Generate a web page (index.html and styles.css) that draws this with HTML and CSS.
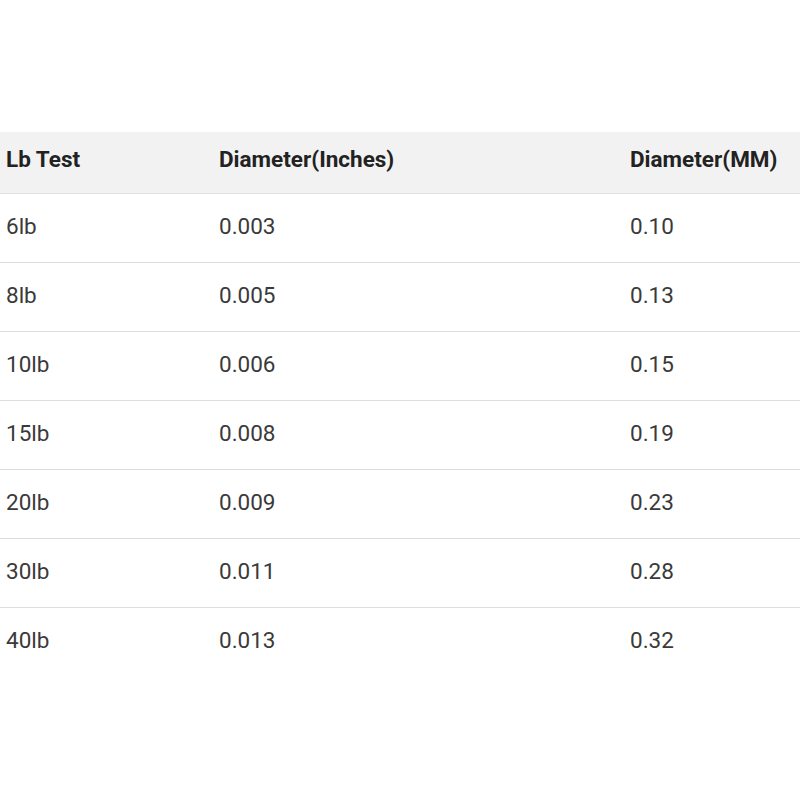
FILE: index.html
```html
<!DOCTYPE html>
<html>
<head>
<meta charset="utf-8">
<link rel="stylesheet" href="styles.css">
</head>
<body>
<div class="page">
  <table class="chart">
    <thead>
      <tr><th>Lb Test</th><th>Diameter(Inches)</th><th>Diameter(MM)</th></tr>
    </thead>
    <tbody>
      <tr><td>6lb</td><td>0.003</td><td>0.10</td></tr>
      <tr><td>8lb</td><td>0.005</td><td>0.13</td></tr>
      <tr><td>10lb</td><td>0.006</td><td>0.15</td></tr>
      <tr><td>15lb</td><td>0.008</td><td>0.19</td></tr>
      <tr><td>20lb</td><td>0.009</td><td>0.23</td></tr>
      <tr><td>30lb</td><td>0.011</td><td>0.28</td></tr>
      <tr class="last"><td>40lb</td><td>0.013</td><td>0.32</td></tr>
    </tbody>
  </table>
</div>
</body>
</html>
```

FILE: styles.css
```css
html, body {
  margin: 0;
  padding: 0;
  background: #fff;
}
.page {
  padding-top: 132px;
  width: 800px;
  overflow: hidden;
}
.chart {
  width: 800px;
  border-collapse: collapse;
  table-layout: fixed;
  font-family: Roboto, "Liberation Sans", sans-serif;
  font-size: 22.5px;
  line-height: 1.2;
}
.chart th:nth-child(1), .chart td:nth-child(1) { width: 213px; }
.chart th:nth-child(2), .chart td:nth-child(2) { width: 411px; }
.chart th {
  background: #f2f2f2;
  color: #222;
  font-weight: 700;
  text-align: left;
  height: 61px;
  padding: 0 0 5px 6px;
  border-bottom: 1px solid #e2e2e2;
  box-sizing: border-box;
  white-space: nowrap;
}
.chart td {
  color: #3a3a3a;
  height: 69px;
  padding: 0 0 2px 6px;
  border-bottom: 1px solid #dedede;
  box-sizing: border-box;
  white-space: nowrap;
}
.chart tr.last td {
  border-bottom: none;
}
```
